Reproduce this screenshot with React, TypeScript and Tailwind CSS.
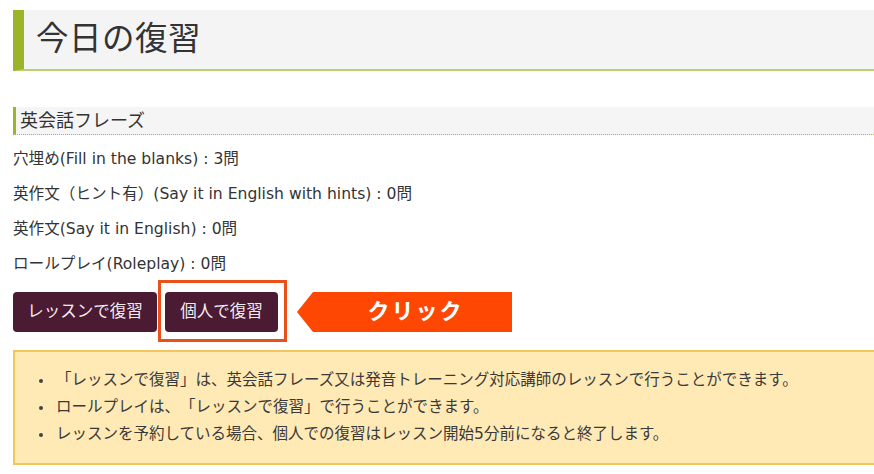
import React from "react";

const font = {
  fontFamily: '"DejaVu Sans", "Noto Sans CJK JP", sans-serif',
};

export default function App() {
  return (
    <div
      className="w-[874px] h-[474px] overflow-hidden bg-white text-[#333333] pl-[13px] [text-spacing-trim:space-all]"
      style={font}
    >
      {/* Title */}
      <div className="mt-[10px] h-[61px] flex items-center bg-[#f4f4f4] border-l-[11px] border-l-[#9bb52b] border-b-2 border-b-[#b9cf72] pl-[12px] -mr-[4px]">
        <h1 className="text-[32.5px] leading-none font-normal text-[#333333] tracking-[0.5px]">
          今日の復習
        </h1>
      </div>

      {/* Subheading */}
      <div className="mt-[36px] h-[28px] flex items-center bg-[#f5f5f5] border-solid border-l-[3px] border-l-[#9bb52b] border-b border-b-[#9fbb3a] [border-bottom-style:dotted] pl-[4px] -mr-[4px]">
        <h2 className="text-[18px] leading-none font-normal text-[#333333]">
          英会話フレーズ
        </h2>
      </div>

      {/* Counts */}
      <div className="mt-[7px] text-[15.6px] leading-[35px] text-[#333333]">
        <p>穴埋め(Fill in the blanks) : 3問</p>
        <p>英作文（ヒント有）(Say it in English with hints) : 0問</p>
        <p>英作文(Say it in English) : 0問</p>
        <p>ロールプレイ(Roleplay) : 0問</p>
      </div>

      {/* Buttons */}
      <div className="mt-[10px] flex items-center h-[40px]">
        <button className="h-[40px] w-[144px] rounded-[4px] bg-[#4b1a33] text-[#f3ecef] text-[16.5px] leading-none">
          レッスンで復習
        </button>
        <div className="relative ml-[8px]">
          <button className="h-[40px] w-[113px] rounded-[4px] bg-[#4b1a33] text-[#f3ecef] text-[16.5px] leading-none">
            個人で復習
          </button>
          <div className="absolute -left-[7px] -top-[12px] w-[129px] h-[62px] border-[3px] border-[#e9501a] pointer-events-none" />
        </div>
        <div className="ml-[19px] h-[40px] w-[215px] bg-[#fe4702] [clip-path:polygon(16px_0,100%_0,100%_100%,16px_100%,0_50%)] flex items-center justify-center pl-[22px]">
          <span className="text-[22px] font-bold text-white leading-none tracking-[2px]">
            クリック
          </span>
        </div>
      </div>

      {/* Notice */}
      <div className="mt-[18px] h-[115px] bg-[#ffe9b5] border-2 border-[#f1c65f] -mr-[6px] pt-[15px]">
        <ul className="text-[15.5px] leading-[27px] text-[#3a3a3a]">
          {[
            "「レッスンで復習」は、英会話フレーズ又は発音トレーニング対応講師のレッスンで行うことができます。",
            "ロールプレイは、「レッスンで復習」で行うことができます。",
            "レッスンを予約している場合、個人での復習はレッスン開始5分前になると終了します。",
          ].map((t) => (
            <li key={t} className="flex items-center">
              <span className="ml-[24px] w-[4px] h-[4px] rounded-full bg-[#444444] shrink-0" />
              <span className="ml-[13px] whitespace-nowrap">{t}</span>
            </li>
          ))}
        </ul>
      </div>
    </div>
  );
}
